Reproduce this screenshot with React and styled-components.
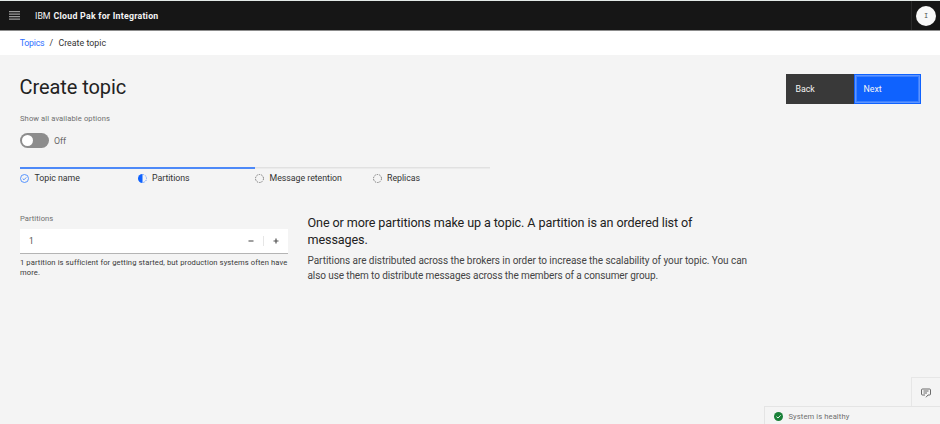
import React from 'react';
import styled, { createGlobalStyle } from 'styled-components';

const GlobalStyle = createGlobalStyle`
  * { box-sizing: border-box; }
  body {
    margin: 0;
    background: #f4f4f4;
    color: #222;
    font-family: Roboto, "Liberation Sans", sans-serif;
    font-size: 8.8px;
  }
  h1, h2, p { margin: 0; font-weight: 400; }
`;

const Page = styled.div`
  position: relative;
  width: 940px;
  height: 424px;
  overflow: hidden;
  background: #f4f4f4;
`;

const Header = styled.header`
  display: flex;
  align-items: center;
  height: 31px;
  padding-left: 9px;
  background: #161616;
  border-top: 1px solid #e3e9e7;
  border-bottom: 1px solid #8c8c8c;
`;

const Brand = styled.div`
  display: flex;
  gap: 3px;
  flex: 1;
  margin-left: 15px;
  line-height: 12px;
  color: #f4f4f4;
  b { font-weight: 700; letter-spacing: 0.235px; }
`;

const AvatarCell = styled.div`
  display: flex;
  align-items: center;
  justify-content: center;
  width: 29px;
  height: 100%;
  border-left: 1px solid #292929;
`;

const Avatar = styled.div`
  display: flex;
  align-items: center;
  justify-content: center;
  width: 20px;
  height: 20px;
  border-radius: 50%;
  background: #f8f8f8;
  color: #525252;
  font: 7px "Liberation Mono", monospace;
`;

const Breadcrumb = styled.nav`
  display: flex;
  gap: 5.2px;
  height: 24px;
  padding-left: 19.7px;
  line-height: 24px;
  background: #fff;
  color: #333;
  letter-spacing: 0.03px;
  a { color: #2f70ff; letter-spacing: -0.23px; }
`;

const Content = styled.main`
  padding: 19px 19px 0 20px;
`;

const TitleBar = styled.div`
  display: flex;
  justify-content: space-between;
  height: 40px;
`;

const Title = styled.h1`
  margin-left: -0.5px;
  padding-top: 1px;
  font-size: 20px;
  line-height: 25px;
  letter-spacing: -0.08px;
`;

const Actions = styled.div`
  display: flex;
  height: 30px;
`;

const ActionButton = styled.button`
  width: ${({ $primary }) => ($primary ? '67px' : '68px')};
  padding: 0 0 0 ${({ $primary }) => ($primary ? '7.5px' : '9.5px')};
  border: ${({ $primary }) => ($primary ? '2px solid #5d94ff' : '0')};
  outline: ${({ $primary }) => ($primary ? '1px solid #0f62fe' : '0')};
  outline-offset: -1px;
  box-shadow: ${({ $primary }) => ($primary ? 'inset 0 0 0 1px #3d80ff' : 'none')};
  background: ${({ $primary }) => ($primary ? '#0f62fe' : '#393939')};
  color: #f4f4f4;
  font: inherit;
  text-align: left;
`;

const Label = styled.div`
  color: #6f6f6f;
  font-size: 7.6px;
  line-height: 10px;
  letter-spacing: ${({ $spacing }) => $spacing ?? '0.1px'};
`;

const ToggleRow = styled.div`
  display: flex;
  align-items: center;
  gap: 5px;
  height: 15px;
  margin-top: 9px;
  color: #6a6a6a;
`;

const ToggleTrack = styled.span`
  width: 29px;
  height: 15px;
  padding: 2px;
  border-radius: 8px;
  background: #8d8d8d;
  &::before {
    content: '';
    display: block;
    width: 11px;
    height: 11px;
    border-radius: 50%;
    background: #fff;
  }
`;

const Steps = styled.div`
  display: flex;
  margin-top: 19px;
`;

const Step = styled.div`
  display: flex;
  align-items: center;
  gap: 5.5px;
  width: 117.5px;
  height: 20px;
  padding-top: 2px;
  box-shadow: inset 0 ${({ $active }) => ($active ? '2px #4d89f8' : '1.5px #e1e1e1')};
  letter-spacing: -0.03px;
  color: #333;
  svg { flex: none; }
`;

const Columns = styled.div`
  display: grid;
  grid-template-columns: 268px 450px;
  column-gap: 19.5px;
  margin-top: 26.5px;
`;

const NumberField = styled.div`
  display: flex;
  align-items: center;
  height: 25px;
  margin-top: 5px;
  padding: 0 7px 0 9px;
  background: #fff;
  border-bottom: 1px solid #b4b4b4;
  color: #525252;
`;

const NumberValue = styled.span`
  flex: 1;
  font-size: 8.4px;
`;

const Stepper = styled.div`
  display: flex;
  align-items: center;
  gap: 7px;
`;

const Divider = styled.i`
  width: 1px;
  height: 10px;
  background: #e6e6e6;
`;

const Helper = styled.p`
  margin-top: 4px;
  font-size: 7.6px;
  line-height: 10px;
  letter-spacing: 0.105px;
  color: #393939;
  white-space: nowrap;
`;

const Explain = styled.section`
  padding-top: 0.5px;
  white-space: nowrap;
`;

const Lead = styled.h2`
  font-size: 12.6px;
  line-height: 17px;
  letter-spacing: -0.11px;
`;

const Body = styled.p`
  margin-top: 5px;
  font-size: 10px;
  line-height: 15px;
  letter-spacing: ${({ $tight }) => ($tight ? '-0.1px' : '-0.051px')};
  color: #444;
  & + & { margin-top: 0; }
`;

const FeedbackTab = styled.div`
  position: absolute;
  right: 0;
  bottom: 17px;
  display: flex;
  align-items: center;
  justify-content: center;
  width: 29px;
  height: 30px;
  border: 1px solid #e6e6e6;
  border-width: 1px 0 0 1px;
`;

const StatusBar = styled.div`
  position: absolute;
  right: 0;
  bottom: 0;
  display: flex;
  align-items: center;
  gap: 5.5px;
  width: 176px;
  height: 18px;
  padding: 2px 0 0 9px;
  border: 1px solid #e4e4e4;
  border-width: 1px 0 0 1px;
`;

const MenuIcon = () => (
  <svg width="11" height="9" viewBox="0 0 11 9" fill="#9b9b9b">
    <path d="M0 0h11v1.2H0zM0 2.5h11v1.2H0zM0 5h11v1.2H0zM0 7.5h11v1.2H0z" />
  </svg>
);

const DoneIcon = () => (
  <svg width="9" height="9" viewBox="0 0 9 9" fill="none" stroke="#4589ff">
    <circle cx="4.5" cy="4.5" r="4" strokeWidth=".9" />
    <path d="M2.7 4.6 4 5.8 6.3 3.4" strokeWidth=".9" />
  </svg>
);

const CurrentIcon = () => (
  <svg width="9" height="9" viewBox="0 0 9 9">
    <path d="M4.5 0a4.5 4.5 0 0 0 0 9z" fill="#0f62fe" />
    <path d="M4.5.5a4 4 0 0 1 0 8" fill="none" stroke="#5c94ff" strokeWidth=".9" strokeDasharray="1.4 1.1" />
  </svg>
);

const PendingIcon = () => (
  <svg width="9" height="9" viewBox="0 0 9 9" fill="none">
    <circle cx="4.5" cy="4.5" r="4" stroke="#6c6c6c" strokeWidth=".9" strokeDasharray="1.5 1.01" />
  </svg>
);

const MinusIcon = () => (
  <svg width="10" height="10" viewBox="0 0 10 10">
    <path d="M2.5 5h5" stroke="#525252" strokeWidth="1.1" />
  </svg>
);

const PlusIcon = () => (
  <svg width="10" height="10" viewBox="0 0 10 10">
    <path d="M2.5 5h5M5 2.5v5" stroke="#525252" strokeWidth="1.2" />
  </svg>
);

const ChatIcon = () => (
  <svg width="10" height="10" viewBox="0 0 10 10" fill="none" stroke="#5c5c5c" strokeWidth=".9">
    <path d="M4 7H1.5a1 1 0 0 1-1-1V2a1 1 0 0 1 1-1h7a1 1 0 0 1 1 1v4a1 1 0 0 1-1 1H7L5 9.3M2.5 3h5M2.5 5H6" />
  </svg>
);

const HealthyIcon = () => (
  <svg width="9" height="9" viewBox="0 0 9 9" fill="none">
    <circle cx="4.5" cy="4.5" r="4.5" fill="#198038" />
    <path d="M2.5 4.7 4 6 6.6 3.3" stroke="#fff" strokeWidth=".9" />
  </svg>
);

const steps = [
  { name: 'Topic name', Icon: DoneIcon, active: true },
  { name: 'Partitions', Icon: CurrentIcon, active: true },
  { name: 'Message retention', Icon: PendingIcon },
  { name: 'Replicas', Icon: PendingIcon },
];

export default function App() {
  return (
    <Page>
      <GlobalStyle />
      <Header>
        <MenuIcon />
        <Brand><span>IBM</span><b>Cloud Pak for Integration</b></Brand>
        <AvatarCell><Avatar>I</Avatar></AvatarCell>
      </Header>
      <Breadcrumb><a>Topics</a><span>/</span><span>Create topic</span></Breadcrumb>
      <Content>
        <TitleBar>
          <Title>Create topic</Title>
          <Actions>
            <ActionButton>Back</ActionButton>
            <ActionButton $primary>Next</ActionButton>
          </Actions>
        </TitleBar>
        <Label>Show all available options</Label>
        <ToggleRow><ToggleTrack />Off</ToggleRow>
        <Steps>
          {steps.map(({ name, Icon, active }) => (
            <Step key={name} $active={active}><Icon />{name}</Step>
          ))}
        </Steps>
        <Columns>
          <div>
            <Label $spacing="0.05px">Partitions</Label>
            <NumberField>
              <NumberValue>1</NumberValue>
              <Stepper><MinusIcon /><Divider /><PlusIcon /></Stepper>
            </NumberField>
            <Helper>1 partition is sufficient for getting started, but production systems often have<br />more.</Helper>
          </div>
          <Explain>
            <Lead>One or more partitions make up a topic. A partition is an ordered list of<br />messages.</Lead>
            <Body>Partitions are distributed across the brokers in order to increase the scalability of your topic. You can</Body>
            <Body $tight>also use them to distribute messages across the members of a consumer group.</Body>
          </Explain>
        </Columns>
      </Content>
      <FeedbackTab><ChatIcon /></FeedbackTab>
      <StatusBar><HealthyIcon /><Label>System is healthy</Label></StatusBar>
    </Page>
  );
}
